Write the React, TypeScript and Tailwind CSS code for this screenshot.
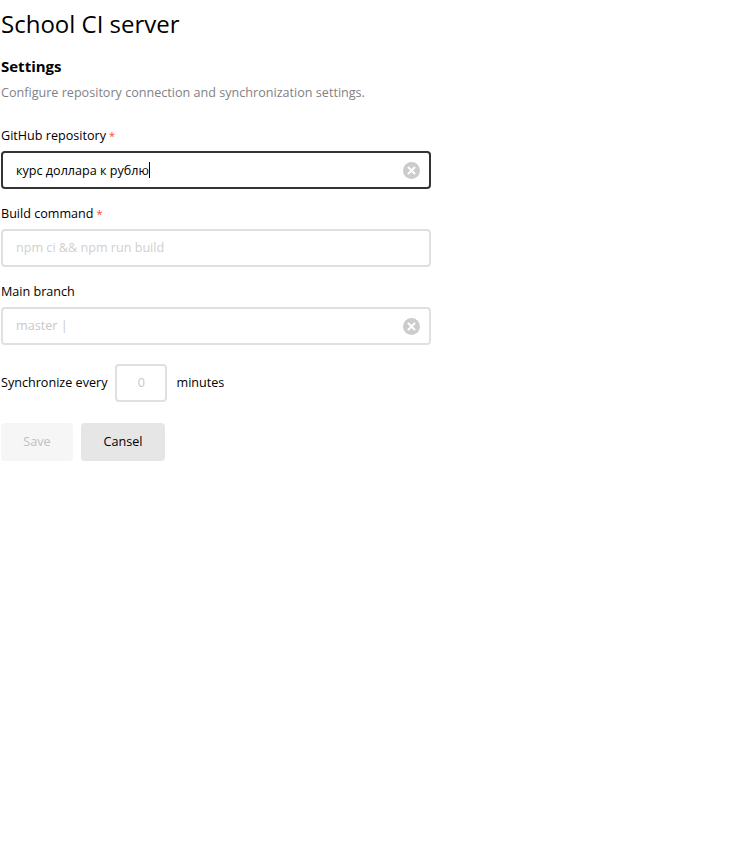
import React from "react";

function ClearIcon() {
  return (
    <svg width="17" height="17" viewBox="0 0 17 17" className="shrink-0">
      <circle cx="8.5" cy="8.5" r="8.5" fill="#cccccc" />
      <path d="M5.5 5.5 L11.5 11.5 M11.5 5.5 L5.5 11.5" stroke="#ffffff" strokeWidth="2" strokeLinecap="round" />
    </svg>
  );
}

function Star() {
  return <span className="ml-[3px] text-[11px] text-[#ff4136]">*</span>;
}

export default function App() {
  return (
    <div className="min-h-[848px] bg-white pl-[1px] text-black" style={{ fontFamily: '"Open Sans", "Noto Sans", sans-serif' }}>
      <h1 className="pt-[8px] text-[24px] leading-[32px] font-normal">School CI server</h1>
      <h2 className="mt-[16px] text-[15px] leading-[20px] font-bold">Settings</h2>
      <p className="mt-[8px] text-[12.6px] leading-[18px] text-[#7f8285]">Configure repository connection and synchronization settings.</p>

      <div className="mt-[25px] w-[430px] text-[12.6px]">
        <div className="leading-[18px]">GitHub repository<Star /></div>
        <div className="mt-[6px] flex h-[38px] items-center rounded-[4px] border-2 border-[#333333] pl-[13px] pr-[9px]">
          <span className="flex-1">курс доллара к рублю<span className="inline-block h-[16px] w-px translate-y-[3px] bg-black" /></span>
          <ClearIcon />
        </div>

        <div className="mt-[16px] leading-[18px]">Build command<Star /></div>
        <div className="mt-[6px] flex h-[38px] items-center rounded-[4px] border-2 border-[#e0e0e0] pl-[13px] pr-[9px]">
          <span className="flex-1 text-[#d0d0d0]">npm ci &amp;&amp; npm run build</span>
        </div>

        <div className="mt-[16px] leading-[18px]">Main branch</div>
        <div className="mt-[6px] flex h-[38px] items-center rounded-[4px] border-2 border-[#e0e0e0] pl-[13px] pr-[9px]">
          <span className="flex-1 text-[#c8c8c8]">master |</span>
          <ClearIcon />
        </div>

        <div className="mt-[19px] flex items-center">
          <span>Synchronize every</span>
          <div className="ml-[8px] flex h-[38px] w-[52px] items-center justify-center rounded-[4px] border-2 border-[#e0e0e0] text-[#c8c8c8]">0</div>
          <span className="ml-[9px]">minutes</span>
        </div>

        <div className="mt-[21px] flex gap-[8px]">
          <div className="flex h-[38px] w-[72px] items-center justify-center rounded-[4px] bg-[#f6f6f6] text-[#c0c0c0]">Save</div>
          <div className="flex h-[38px] w-[84px] items-center justify-center rounded-[4px] bg-[#e6e6e6]">Cansel</div>
        </div>
      </div>
    </div>
  );
}
